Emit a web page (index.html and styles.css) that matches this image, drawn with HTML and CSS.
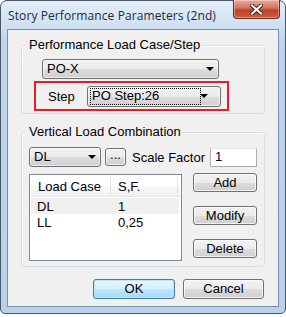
FILE: index.html
```html
<!DOCTYPE html>
<html>
<head>
<meta charset="utf-8">
<link rel="stylesheet" href="styles.css">
</head>
<body>
<div class="win">
  <div class="titlebar">
    <span class="title">Story Performance Parameters (2nd)</span>
    <div class="close"><svg width="13" height="11" viewBox="0 0 13 11"><path d="M2 1.5 L11 9.5 M11 1.5 L2 9.5" stroke="#3a2a28" stroke-width="4" stroke-linecap="square"/><path d="M2 1.5 L11 9.5 M11 1.5 L2 9.5" stroke="#ffffff" stroke-width="2" stroke-linecap="square"/></svg></div>
  </div>
  <div class="client">
    <div class="group g1">
      <span class="legend">Performance Load Case/Step</span>
      <div class="combo c-pox"><span class="ctext">PO-X</span><span class="arrow"></span></div>
      <div class="redbox">
        <span class="lbl step">Step</span>
        <div class="combo c-step"><span class="ctext focus">PO Step:26</span><span class="arrow"></span></div>
      </div>
    </div>
    <div class="group g2">
      <span class="legend">Vertical Load Combination</span>
      <div class="row1">
        <div class="combo c-dl"><span class="ctext">DL</span><span class="arrow"></span></div>
        <div class="btn dots">...</div>
        <span class="lbl sf">Scale Factor</span>
        <div class="input">1</div>
      </div>
      <div class="row2">
        <div class="list">
          <div class="lhead"><span class="col1">Load Case</span><span class="col2">S,F.</span><span class="col3"></span></div>
          <div class="lrow sel"><span class="col1">DL</span><span class="col2">1</span></div>
          <div class="lrow"><span class="col1">LL</span><span class="col2">0,25</span></div>
        </div>
        <div class="sidebtns">
          <div class="btn">Add</div>
          <div class="btn">Modify</div>
          <div class="btn">Delete</div>
        </div>
      </div>
    </div>
    <div class="bottom">
      <div class="btn default">OK</div>
      <div class="btn">Cancel</div>
    </div>
  </div>
</div>
</body>
</html>
```
FILE: styles.css
```css
* { box-sizing: border-box; }
html, body { margin: 0; padding: 0; background: #ffffff; }
body { width: 286px; height: 317px; overflow: hidden; font-family: "Liberation Sans", Arial, sans-serif; font-size: 13px; color: #000; }
.win {
  width: 286px; height: 314px;
  border: 1px solid #4a5566;
  border-radius: 7px 7px 5px 5px;
  background: linear-gradient(#e3edf8 0px, #d3e3f4 20px, #bfd5ee 40px, #b9d1ec 100%);
  padding: 0 6px 6px 6px;
  display: flex; flex-direction: column;
}
.titlebar { height: 28px; display: flex; align-items: flex-start; }
.title { font-family: "Open Sans", "Liberation Sans", sans-serif; font-size: 12px; color: #1e2a3a; margin-top: 6px; margin-left: 1px; flex: 1; letter-spacing: 0.1px; }
.close {
  width: 47px; height: 19px; margin-top: -1px; margin-right: -1px;
  border: 1px solid #6a2c22; border-top: none;
  border-radius: 0 0 4px 4px;
  background: linear-gradient(#e9a99a 0%, #d8705c 45%, #c2412a 55%, #cf5b3e 100%);
  box-shadow: inset 0 0 0 1px rgba(255,255,255,0.35);
  display: flex; align-items: center; justify-content: center;
}
.client {
  width: 272px; height: 278px;
  border: 1px solid #7f8ea3;
  background: #f0f0f0;
  display: flex; flex-direction: column;
}
.group {
  border: 1px solid #d5dfe5;
  border-radius: 3px;
  box-shadow: inset 1px 1px 0 #fff;
  margin-left: 13px; width: 244px;
  display: flex; flex-direction: column;
}
.legend { background: #f0f0f0; padding: 0 2px; margin-left: 5px; margin-top: -9px; height: 16px; line-height: 16px; width: max-content; }
.g1 { margin-top: 15px; height: 69px; }
.g2 { margin-top: 18px; height: 135px; }
.combo {
  height: 20px; border: 1px solid #707070; border-radius: 3px;
  background: linear-gradient(#f2f2f2 0%, #ebebeb 50%, #dddddd 51%, #cfcfcf 100%);
  display: flex; align-items: center; position: relative;
  box-shadow: inset 0 0 0 1px rgba(255,255,255,0.6);
}
.ctext { padding-left: 4px; flex: 1; line-height: 14px; }
.arrow { width: 0; height: 0; border-left: 4px solid transparent; border-right: 4px solid transparent; border-top: 4px solid #000; margin-right: 4px; }
.c-pox { margin-left: 20px; margin-top: 6px; width: 177px; }
.redbox { margin-left: 12px; margin-top: 2px; width: 195px; height: 30px; border: 2px solid #e21f2b; display: flex; align-items: center; padding-left: 12px; }
.step { width: 39px; }
.c-step { width: 134px; height: 21px; }
.focus { flex: 0 0 109px; margin-left: 3px; padding-left: 1px; outline: 1px dotted #000; height: 15px; }
.row1 { display: flex; align-items: center; margin-top: 7px; margin-left: 7px; height: 20px; }
.c-dl { width: 72px; }
.btn {
  border: 1px solid #707070; border-radius: 3px;
  background: linear-gradient(#f2f2f2 0%, #ebebeb 50%, #dddddd 51%, #cfcfcf 100%);
  box-shadow: inset 0 0 0 1px rgba(255,255,255,0.7);
  display: flex; align-items: center; justify-content: center;
  height: 19px; line-height: 14px;
}
.dots { width: 21px; height: 18px; margin-left: 4px; align-items: flex-end; padding-bottom: 3px; }
.sf { margin-left: 6px; width: 78px; }
.input { width: 47px; height: 19px; background: #fff; border: 1px solid #abadb3; border-top-color: #e3e9ef; padding-left: 4px; line-height: 16px; }
.row2 { display: flex; margin-top: 7px; margin-left: 7px; }
.list { width: 153px; height: 87px; border: 1px solid #828790; background: #fff; padding: 1px; }
.lhead { height: 21px; display: flex; align-items: center; background: linear-gradient(#ffffff 0%, #ffffff 50%, #f7f8fa 51%, #f1f2f4 100%); border-bottom: 1px solid #e5e5e5; }
.lhead .col1 { width: 80px; height: 21px; line-height: 21px; padding-left: 7px; border-right: 1px solid #e3e5e7; }
.lhead .col2 { width: 67px; height: 21px; line-height: 21px; padding-left: 7px; border-right: 1px solid #e3e5e7; }
.lrow { height: 16px; display: flex; align-items: center; }
.lrow .col1 { width: 80px; padding-left: 6px; }
.lrow .col2 { padding-left: 7px; }
.lrow.sel { background: #f0f0f0; width: 148px; margin-top: 1px; }
.sidebtns { display: flex; flex-direction: column; gap: 14px; margin-left: 11px; margin-top: -1px; }
.sidebtns .btn { width: 64px; }
.bottom { display: flex; margin-top: 12px; margin-left: 85px; gap: 8px; }
.bottom .btn { width: 81px; height: 20px; }
.bottom .default { width: 82px; border-color: #3c7fb1; background: linear-gradient(#eaf6fd 0%, #d9f0fc 50%, #bee6fd 51%, #a7d9f5 100%); box-shadow: inset 0 0 0 1px #b9e7f9; }
```
